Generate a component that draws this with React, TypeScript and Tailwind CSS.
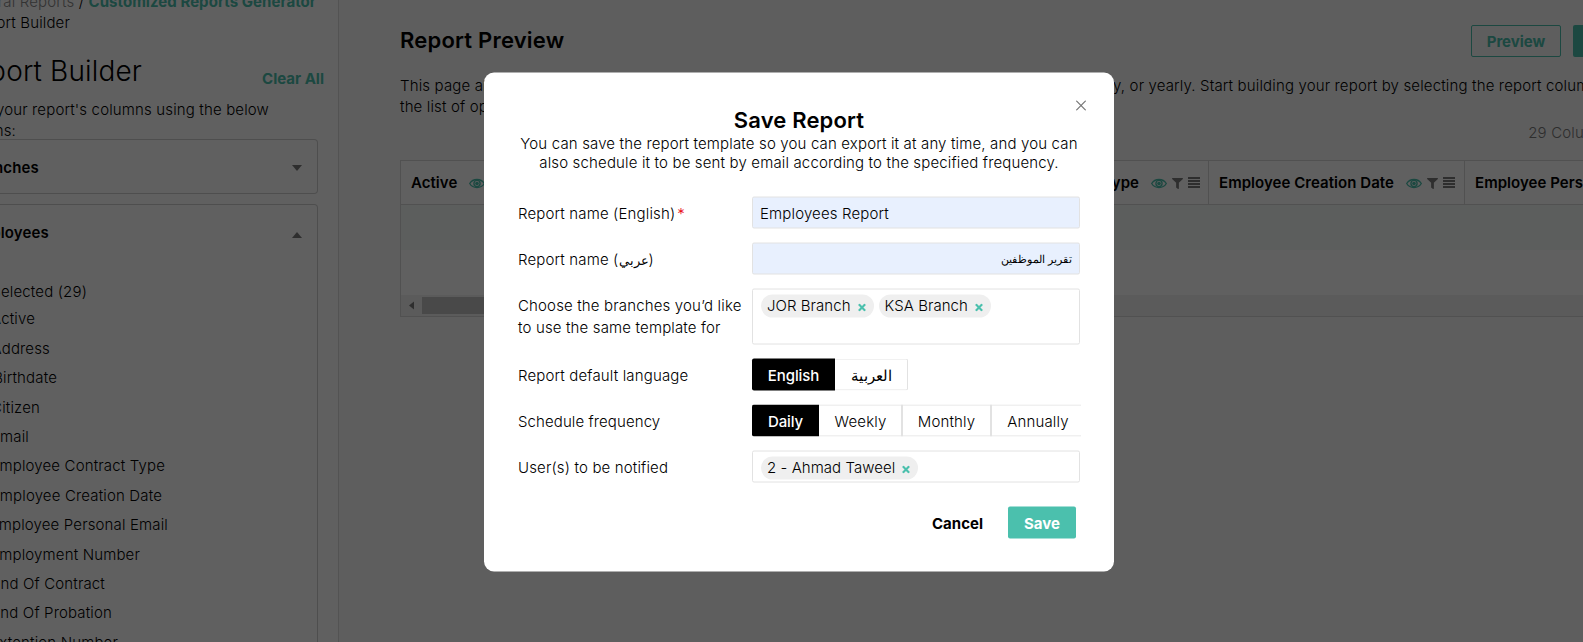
import { FaFilter } from 'react-icons/fa'

const columns = [
  'Active',
  'Address',
  'Birthdate',
  'Citizen',
  'Email',
  'Employee Contract Type',
  'Employee Creation Date',
  'Employee Personal Email',
  'Employment Number',
  'End Of Contract',
  'End Of Probation',
  'Extention Number',
]

// visible right edge of each sidebar label, the panel is scrolled sideways
const columnEnds = [
  'w-[35px]', 'w-[50px]', 'w-[57px]', 'w-[40px]', 'w-[29px]', 'w-[165px]',
  'w-[162px]', 'w-[168px]', 'w-[140px]', 'w-[105px]', 'w-[112px]', 'w-[118px]',
]

function EyeIcon() {
  return (
    <svg viewBox="0 0 16 10" className="w-4 h-[11px] mt-0.5 text-[#4bc0ad]" fill="none" stroke="currentColor">
      <path d="M0.7 5C4 -0.4 12 -0.4 15.3 5C12 10.4 4 10.4 0.7 5Z" strokeWidth="1.4" />
      <circle cx="8" cy="5" r="3.1" strokeWidth="1.3" />
      <circle cx="8" cy="5" r="1.8" fill="currentColor" stroke="none" />
    </svg>
  )
}

function BarsIcon() {
  return (
    <svg viewBox="0 0 12 11" className="w-3 h-[11px]" fill="#7b7b7b">
      <rect y="0" width="12" height="2" />
      <rect y="3" width="12" height="2" />
      <rect y="6" width="12" height="2" />
      <rect y="9" width="12" height="2" />
    </svg>
  )
}

function HeaderCell({ title, className }: { title: string; className: string }) {
  return (
    <div className={`shrink-0 flex items-center border-r border-[#d6d6d6] overflow-hidden whitespace-nowrap ${className}`}>
      <span className="font-semibold tracking-[0.05px] pt-0.5">{title}</span>
      <span className="flex items-center gap-[5px] ml-3">
        <EyeIcon />
        <FaFilter className="size-[11px] mt-px text-[#7b7b7b]" />
        <BarsIcon />
      </span>
    </div>
  )
}

function Tag({ label }: { label: string }) {
  return (
    <span className="h-[23px] flex items-center rounded-full bg-[#efefef] pl-[6px] pr-[8px] whitespace-nowrap tracking-[0.05px]">
      {label}
      <svg viewBox="0 0 10 10" className="size-[8px] ml-[7px] mt-[3px]" stroke="#4bc0ad" strokeWidth="2.6">
        <path d="M1 1L9 9M9 1L1 9" />
      </svg>
    </span>
  )
}

function Sidebar() {
  return (
    <aside className="w-[339px] shrink-0 h-full bg-white border-r border-[#dcdcdc] overflow-hidden whitespace-nowrap">
      <div className="h-[13px] -mt-1 w-[316px] flex justify-end items-center">
        <span className="text-[#888]">General Reports&nbsp;</span>/&nbsp;
        <span className="font-bold tracking-[0.05px] text-[#4bc0ad]">Customized Reports Generator</span>
      </div>
      <div className="mt-[3px] h-[22px] w-[70px] flex justify-end items-center">Report Builder</div>

      <div className="mt-[17px] h-[40px] flex items-center justify-between pr-[14px]">
        <h1 className="w-[142px] flex justify-end text-[28px]">Report Builder</h1>
        <span className="font-bold tracking-normal text-[#4bc0ad] mt-4">Clear All</span>
      </div>
      <div className="mt-[9px] h-[21px] w-[269px] flex justify-end items-center">Select your report's columns using the below</div>
      <div className="h-[21px] w-[16px] flex justify-end items-center">options:</div>

      {/* Branches */}
      <div className="-mt-[3px] w-[318px] h-[55px] flex items-center justify-between border border-l-0 border-[#d0d0d0] rounded-r-sm pr-[15px]">
        <span className="w-[39px] flex justify-end font-semibold pt-1">Branches</span>
        <svg viewBox="0 0 10 6" className="w-[10px] h-[6px] mt-0.5" fill="#7b7b7b"><path d="M0 0H10L5 6Z" /></svg>
      </div>

      {/* Employees */}
      <div className="mt-[10px] w-[318px] h-[500px] border border-l-0 border-[#d0d0d0] rounded-r-sm">
        <div className="h-[56px] flex items-center justify-between pr-[15px]">
          <span className="w-[49px] flex justify-end font-semibold">Employees</span>
          <svg viewBox="0 0 10 6" className="w-[10px] h-[6px] mt-1" fill="#7b7b7b"><path d="M0 6H10L5 0Z" /></svg>
        </div>
        <div className="mt-[19px] h-[25px] w-[87px] flex justify-end items-center">Selected (29)</div>
        {columns.map((c, i) => (
          <div key={c} className={`h-[29.4px] flex justify-end items-center ${columnEnds[i]}`}>{c}</div>
        ))}
      </div>
    </aside>
  )
}

function Preview() {
  return (
    <main className="flex-1 min-w-0 h-full bg-[#fafafa] pl-[61px] pt-[25px] overflow-hidden whitespace-nowrap">
      <div className="flex justify-between h-8">
        <h2 className="text-[22px] leading-[31px] font-semibold tracking-[0.2px]">Report Preview</h2>
        <div className="flex gap-3 -mr-[60px]">
          <button className="w-[90px] h-8 pt-0.5 border border-[#4bc0ad] rounded-xs font-bold tracking-normal text-[#4bc0ad]">Preview</button>
          <button className="w-[70px] h-8 bg-[#4bc0ad] rounded-xs" />
        </div>
      </div>
      <div className="mt-[18px] leading-[21px]">
        <div className="flex">
          <span className="w-[713px] shrink-0 overflow-hidden">This page allows you to build your own report</span>
          <span>y, or yearly. Start building your report by selecting the report columns from</span>
        </div>
        <div>the list of options</div>
      </div>
      <div className="mt-[5px] h-[22px] flex items-center justify-end -mr-[31px] text-[#7b7b7b]">29 Columns</div>

      {/* Table */}
      <div className="mt-[16px] w-[1300px] border border-[#d6d6d6]">
        <div className="flex h-[43px] bg-white">
          <HeaderCell title="Active" className="w-[136px] pl-[10px]" />
          <HeaderCell title="Address" className="w-[412px] pl-[10px]" />
          <HeaderCell title="Employee Contract Type" className="w-[260px] justify-end pr-2" />
          <HeaderCell title="Employee Creation Date" className="w-[256px] pl-[10px]" />
          <HeaderCell title="Employee Personal Email" className="w-[260px] pl-[10px]" />
        </div>
        <div className="h-[46px] border-t border-[#d6d6d6] bg-[#f5faf8]" />
        <div className="h-[45px] bg-white" />
        <div className="h-[21px] bg-[#f1f1f1] flex items-center">
          <svg viewBox="0 0 5 8" className="w-[5px] h-[9px] ml-2" fill="#7b7b7b"><path d="M5 0V8L0 4Z" /></svg>
          <div className="ml-2 w-[460px] h-[17px] bg-[#c1c1c1]" />
        </div>
      </div>
    </main>
  )
}

function SaveDialog() {
  return (
    <div className="relative w-[630px] h-[499px] -translate-y-[0.5px] bg-white rounded-[10px] pl-[34px] pr-[34px] pt-[35px]">
      <svg viewBox="0 0 10 10" className="absolute right-[28px] top-[28px] size-[10px]" stroke="#777" strokeWidth="1.1">
        <path d="M0 0L10 10M10 0L0 10" />
      </svg>
      <h2 className="h-[26px] leading-[25px] text-[22px] font-semibold text-center">Save Report</h2>
      <p className="leading-[19px] text-center whitespace-nowrap">
        You can save the report template so you can export it at any time, and you can
        <br />
        also schedule it to be sent by email according to the specified frequency.
      </p>

      <div className="mt-[25px] grid grid-cols-[234px_328px] gap-y-[14px]">
        <label className="h-8 leading-[34px]">Report name (English)<span className="text-red-600 ml-0.5">*</span></label>
        <div className="h-8 border border-[#e2e2e2] rounded-xs bg-[#e8f0fe] px-[7px] leading-8">Employees Report</div>

        <label className="h-8 leading-[34px]">Report name (<span className="text-[13px]">عربي</span>)</label>
        <div dir="rtl" className="h-8 border border-[#e2e2e2] rounded-xs bg-[#e8f0fe] px-[7px] leading-[31px] text-[11px] tracking-normal">تقرير الموظفين</div>

        <label className="h-14 leading-[22px] pt-[6px] whitespace-nowrap">Choose the branches you’d like<br />to use the same template for</label>
        <div className="h-14 border border-[#e2e2e2] rounded-xs pl-2 pt-[5px] flex items-start gap-[5px]">
          <Tag label="JOR Branch" />
          <Tag label="KSA Branch" />
        </div>

        <label className="h-8 leading-[34px]">Report default language</label>
        <div className="flex h-8 leading-[34px]">
          <span className="w-[83px] bg-black text-white font-medium tracking-[-0.1px] text-center rounded-l-xs">English</span>
          <span className="w-[73px] border border-l-0 border-[#e2e2e2] rounded-r-xs text-center leading-[31px]">العربية</span>
        </div>

        <label className="h-8 leading-[34px] tracking-[0.1px]">Schedule frequency</label>
        <div className="flex h-8 leading-8 w-[329px] overflow-hidden text-center">
          <span className="w-[67px] shrink-0 bg-black text-white font-medium tracking-[-0.1px] rounded-l-xs leading-[34px]">Daily</span>
          <span className="w-[84px] shrink-0 border-y border-r-2 border-[#e2e2e2] pl-px">Weekly</span>
          <span className="w-[89px] shrink-0 border-y border-r-2 border-[#e2e2e2]">Monthly</span>
          <span className="w-[92px] shrink-0 border-y border-[#e2e2e2]">Annually</span>
        </div>

        <label className="h-8 leading-[34px]">User(s) to be notified</label>
        <div className="h-8 border border-[#e2e2e2] rounded-xs pl-2 pt-[5px] flex items-start">
          <Tag label="2 - Ahmad Taweel" />
        </div>
      </div>

      <div className="mt-[24px] pr-[4px] flex justify-end items-center gap-[25px] font-bold tracking-normal">
        <button className="pt-0.5">Cancel</button>
        <button className="w-[68px] h-8 pt-0.5 rounded-xs bg-[#4bc0ad] text-white">Save</button>
      </div>
    </div>
  )
}

export default function App() {
  return (
    <div className="relative w-full h-[642px] overflow-hidden font-['Inter','Noto_Sans','DejaVu_Sans',sans-serif] text-[15px] font-light tracking-[0.15px] text-black">
      <div className="flex h-full">
        <Sidebar />
        <Preview />
      </div>

      {/* Backdrop */}
      <div className="absolute inset-0 bg-black/[0.625] flex justify-center pt-[73px] pl-[15px]">
        <SaveDialog />
      </div>
    </div>
  )
}
